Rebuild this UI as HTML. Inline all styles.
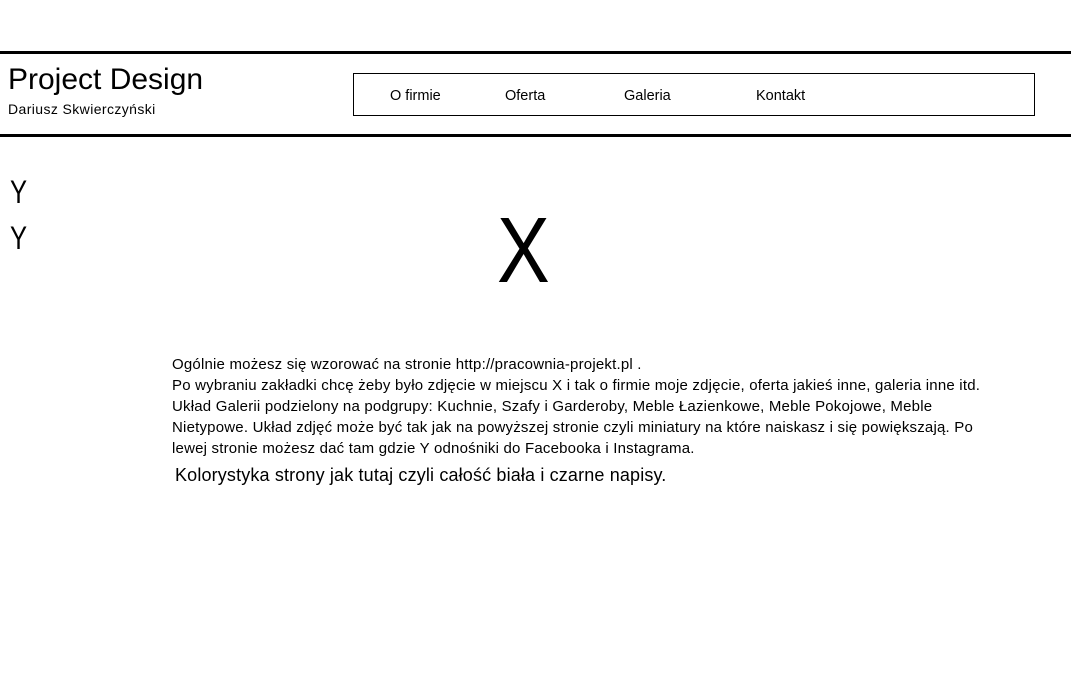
<!DOCTYPE html>
<html><head><meta charset="utf-8"><style>
body{margin:0;width:1071px;height:688px;background:#fff;position:relative;overflow:hidden;font-family:"Liberation Sans",sans-serif;color:#000}
.a{position:absolute;white-space:nowrap;line-height:1}
.hr{position:absolute;left:0;width:1071px;height:3px;background:#000}
.p{position:absolute;left:172px;font-size:15px;line-height:21px;white-space:nowrap;letter-spacing:0.2px}
</style></head><body>
<div class="hr" style="top:51px"></div>
<div class="hr" style="top:134px"></div>
<div class="a" style="left:8px;top:65px;font-size:30px">Project Design</div>
<div class="a" style="left:8px;top:102px;font-size:14px;letter-spacing:0.4px">Dariusz Skwierczyński</div>
<div style="position:absolute;left:353px;top:73px;width:680px;height:41px;border:1px solid #000"></div>
<div class="a" style="left:390px;top:89px;font-size:14.5px">O firmie</div>
<div class="a" style="left:505px;top:89px;font-size:14.5px">Oferta</div>
<div class="a" style="left:624px;top:89px;font-size:14.5px">Galeria</div>
<div class="a" style="left:756px;top:89px;font-size:14.5px">Kontakt</div>
<div class="a" style="left:10px;top:176px;font-size:32px;transform:scaleX(0.8);transform-origin:left">Y</div>
<div class="a" style="left:10px;top:222px;font-size:32px;transform:scaleX(0.8);transform-origin:left">Y</div>
<div class="a" style="left:497px;top:204px;font-size:93px;transform:scaleX(0.85);transform-origin:left">X</div>
<div class="p" style="top:354px">Ogólnie możesz się wzorować na stronie http://pracownia-projekt.pl .</div>
<div class="p" style="top:375px">Po wybraniu zakładki chcę żeby było zdjęcie w miejscu X i tak o firmie moje zdjęcie, oferta jakieś inne, galeria inne itd.</div>
<div class="p" style="top:396px">Układ Galerii podzielony na podgrupy: Kuchnie, Szafy i Garderoby, Meble Łazienkowe, Meble Pokojowe, Meble</div>
<div class="p" style="top:417px">Nietypowe. Układ zdjęć może być tak jak na powyższej stronie czyli miniatury na które naiskasz i się powiększają. Po</div>
<div class="p" style="top:438px">lewej stronie możesz dać tam gdzie Y odnośniki do Facebooka i Instagrama.</div>
<div class="a" style="left:175px;top:466px;font-size:18px;letter-spacing:0.15px">Kolorystyka strony jak tutaj czyli całość biała i czarne napisy.</div>
</body></html>
